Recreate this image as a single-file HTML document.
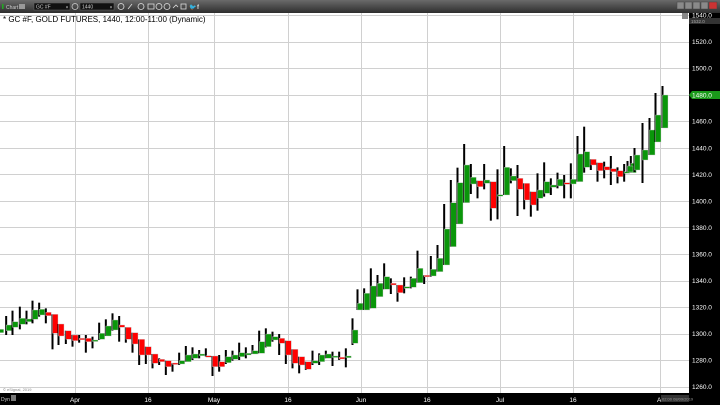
<!DOCTYPE html>
<html><head><meta charset="utf-8"><style>
body{margin:0;width:720px;height:405px;overflow:hidden;background:#fff;font-family:"Liberation Sans",sans-serif}
</style></head><body>
<svg width="720" height="405" xmlns="http://www.w3.org/2000/svg" font-family="Liberation Sans, sans-serif">
<defs><linearGradient id="tb" x1="0" y1="0" x2="0" y2="1"><stop offset="0" stop-color="#6a6a6a"/><stop offset="1" stop-color="#2e2e2e"/></linearGradient></defs>
<rect width="720" height="405" fill="#fff"/>
<g id="grid" stroke="#d0d0d0" stroke-width="1"></g>
<g id="candles"></g>
<text x="3" y="22" font-size="8" fill="#000">* GC #F, GOLD FUTURES, 1440, 12:00-11:00 (Dynamic)</text>
<text x="3" y="391" font-size="4" fill="#888">©</text><text x="7" y="391" font-size="4" fill="#888">eSignal, 2019</text>
<!-- toolbar -->
<rect x="0" y="0" width="720" height="13" fill="url(#tb)"/>
<rect x="2" y="4" width="1.5" height="5" fill="#2a2"/>
<text x="6" y="9" font-size="5" fill="#ccc">Chart</text><rect x="19" y="4" width="6" height="5" fill="#999"/>
<rect x="34" y="3" width="36" height="7" fill="#111" stroke="#666" stroke-width=".5"/><text x="36" y="8.5" font-size="5" fill="#ccc">GC #F</text><text x="66" y="8.5" font-size="4" fill="#ccc">▾</text>
<circle cx="75" cy="6.5" r="3" fill="none" stroke="#ccc" stroke-width=".8"/>
<rect x="80" y="3" width="34" height="7" fill="#111" stroke="#666" stroke-width=".5"/><text x="82" y="8.5" font-size="5" fill="#ccc">1440</text><text x="110" y="8.5" font-size="4" fill="#ccc">▾</text>
<g fill="none" stroke="#ddd" stroke-width=".8">
<circle cx="121" cy="6.5" r="3"/><path d="M128 9l4-5"/><circle cx="141" cy="6.5" r="3"/><rect x="148" y="4" width="6" height="5"/><circle cx="159" cy="6.5" r="3"/><circle cx="167" cy="6.5" r="3"/><path d="M173 8l3-3 2 2"/><rect x="181" y="4" width="5" height="5"/></g>
<text x="189" y="9" font-size="6" fill="#ddd">🐦</text><text x="197" y="9" font-size="6" fill="#ddd" font-weight="bold">f</text>
<g fill="#8a8a8a" stroke="#444" stroke-width=".5"><rect x="677" y="2" width="7" height="7"/><rect x="685" y="2" width="7" height="7"/><rect x="693" y="2" width="7" height="7"/><rect x="701" y="2" width="7" height="7"/></g>
<rect x="709" y="2" width="8" height="7" fill="#c33" stroke="#444" stroke-width=".5"/>
<!-- right axis -->
<rect x="689" y="13" width="31" height="392" fill="#000"/>
<g id="ax" font-size="6.5" fill="#fff"></g>
<rect x="682" y="13" width="6" height="6" fill="#888"/>
<rect x="689" y="18" width="31" height="6" fill="#333"/><text x="691" y="23" font-size="4.5" fill="#aaa">1532.0</text>
<path d="M689 95l3-4h28v8h-28z" fill="#1a9a1a"/><text x="692" y="97.5" font-size="6.5" fill="#fff">1480.0</text>
<!-- bottom axis -->
<rect x="0" y="393" width="720" height="12" fill="#000"/>
<text x="1" y="401" font-size="5" fill="#ccc">Dyn</text><rect x="11" y="395" width="5" height="6" fill="#777"/>
<g font-size="6.5" fill="#fff" text-anchor="middle">
<text x="75" y="402">Apr</text><text x="148" y="402">16</text><text x="214" y="402">May</text><text x="288" y="402">16</text><text x="361" y="402">Jun</text><text x="427" y="402">16</text><text x="500" y="402">Jul</text><text x="573" y="402">16</text></g>
<text x="657" y="402" font-size="6.5" fill="#fff">A</text>
<rect x="661" y="395" width="28" height="7" fill="#333"/><text x="662" y="400.5" font-size="4" fill="#999">02:00 08/09/2019</text>
</svg>
<script>
var NS="http://www.w3.org/2000/svg";
function el(p,t,a){var e=document.createElementNS(NS,t);for(var k in a)e.setAttribute(k,a[k]);p.appendChild(e);return e;}
var g=document.getElementById('grid'),ax=document.getElementById('ax');
[75,148,214,288,361,427,500,573,660].forEach(function(x){el(g,'line',{x1:x+.5,y1:13,x2:x+.5,y2:393});});
for(var i=0;i<15;i++){var p=1540-20*i,y=15+i*26.55;el(g,'line',{x1:0,y1:Math.round(y)+.5,x2:689,y2:Math.round(y)+.5});
 if(p!==1480){var t=el(ax,'text',{x:692,y:y+2.5});t.textContent=p+'.0';}}
var c=document.getElementById('candles');
function cd(x,bt,bb,wt,wb,col){
 if(bb-bt<1.5){bb=bt+1.5;}
 el(c,'rect',{x:x-3.5,y:wt,width:2,height:wb-wt,fill:'#000'});
 el(c,'rect',{x:x-2.5,y:bt,width:5.5,height:bb-bt,fill:col=='g'?'#0a960a':'#f00',stroke:'#ccc','stroke-width':.4});
}
var s1=[[2,118,128,100,135,'g'],[26,105,122,78,135,'g'],[45,95,112,62,135,'g'],[67,85,103,50,118,'g'],[87,87,95,62,103,'g'],[105,60,88,32,100,'g'],[125,58,75,38,80,'g'],[145,67,77,55,100,'r'],[165,73,130,73,178,'r'],[183,102,138,102,165,'r'],[205,122,148,122,162,'r'],[225,135,152,135,170,'r'],[245,145,148,135,158,'r'],[265,145,155,135,188,'r'],[285,150,152,140,175,'g'],[305,130,148,98,150,'g'],[325,108,138,88,138,'g'],[345,90,120,70,122,'g'],[365,105,112,78,155,'r'],[385,112,148,112,158,'r'],[405,128,162,128,188,'r'],[425,148,195,148,225,'r'],[445,170,195,170,222,'r'],[465,192,220,192,235,'r'],[485,208,215,205,225,'r'],[505,212,230,212,255,'r'],[525,219,221,220,245,'r'],[545,212,222,188,225,'g'],[565,195,215,168,215,'g'],[585,192,205,172,210,'g'],[605,192,197,180,205,'g'],[625,197,200,175,200,'r'],[645,198,230,198,258,'r'],[665,215,230,195,245,'r'],[685,200,218,180,222,'g'],[705,195,208,182,212,'g'],[725,188,200,158,210,'g'],[745,190,195,172,205,'g'],[765,182,192,165,192,'g'],[785,155,190,122,190,'g'],[805,132,170,115,172,'g'],[825,140,150,125,155,'g'],[845,145,160,132,195,'r'],[865,152,195,152,222,'r'],[885,178,220,178,235,'r'],[905,200,225,200,250,'r'],[925,215,238,215,240,'r'],[945,212,220,182,225,'g'],[965,195,215,190,225,'g'],[985,192,205,182,205,'g'],[1005,198,202,185,228,'g'],[1025,202,207,185,210,'r'],[1045,198,203,175,232,'g'],[1065,120,160,85,165,'g']];
s1.forEach(function(d){cd(d[0]/3,290+d[1]/3,290+d[2]/3,290+d[3]/3,290+d[4]/3,d[5]);});
var s2=[[60,520,540,478,540,'g'],[80,490,540,475,540,'g'],[100,468,535,415,535,'g'],[120,460,500,435,500,'g'],[140,440,478,400,478,'g'],[160,460,465,445,492,'r'],[180,465,488,465,515,'r'],[200,470,475,442,490,'g'],[220,445,472,440,475,'g'],[240,415,458,362,458,'g'],[260,436,438,436,462,'r'],[280,418,438,378,440,'g'],[300,385,425,345,425,'g'],[320,297,405,222,405,'g'],[340,218,350,150,350,'g'],[360,158,282,113,282,'g'],[380,105,218,42,218,'g'],[400,142,162,102,192,'g'],[420,152,170,152,205,'r'],[440,150,160,102,178,'g'],[460,155,235,155,272,'r'],[480,194,196,118,268,'g'],[500,112,195,48,195,'g'],[520,138,152,115,160,'g'],[540,145,178,105,258,'r'],[560,160,210,160,238,'r'],[580,185,225,185,260,'r'],[600,180,205,130,242,'g'],[620,155,190,97,200,'g'],[640,165,172,145,195,'g'],[660,148,168,128,175,'g'],[680,158,163,135,205,'r'],[700,148,162,100,205,'g'],[720,72,155,18,155,'g'],[740,65,112,-10,128,'g'],[760,88,105,88,120,'r'],[780,98,122,98,155,'r'],[800,110,120,95,145,'r'],[820,116,125,78,165,'r'],[840,122,140,112,160,'r'],[860,125,130,102,155,'g'],[880,100,128,78,128,'g']];
s2.forEach(function(d){cd(340+d[0]/3,130+d[1]/3,130+d[2]/3,130+d[3]/3,130+d[4]/3,d[5]);});
[[630,166,172,161,172],[637,155,170,148,172],[645,150,160,123,183],[652,130,155,118,155],[658,115,142,93,142],[665,95,128,86,128]].forEach(function(d){cd(d[0],d[1],d[2],d[3],d[4],'g');});
</script>
</body></html>
